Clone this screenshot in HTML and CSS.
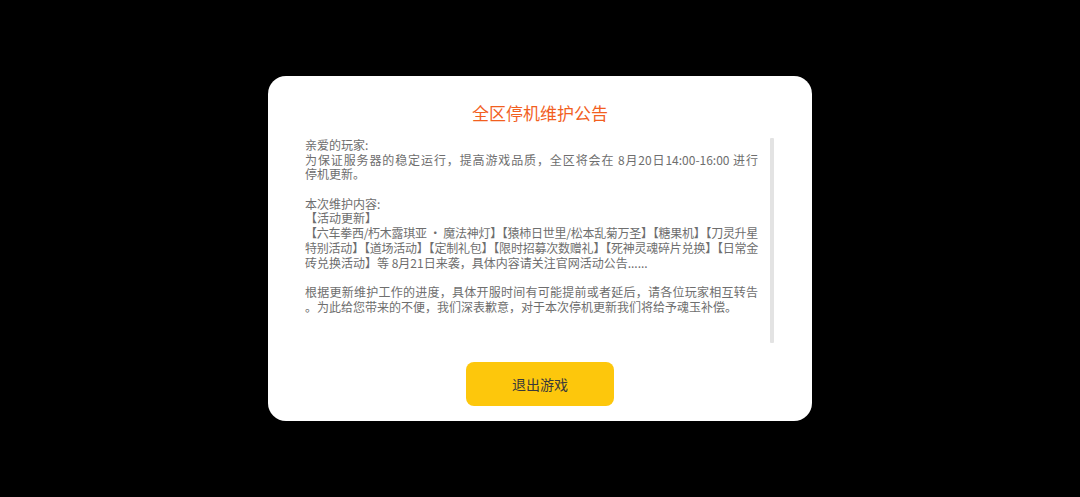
FILE: index.html
```html
<!DOCTYPE html>
<html lang="zh-CN">
<head>
<meta charset="utf-8">
<title>全区停机维护公告</title>
<link rel="stylesheet" href="styles.css">
</head>
<body>
<div class="screen">
  <div class="card">
    <h1 class="title">全区停机维护公告</h1>
    <div class="scroll">
      <div class="content">
        <div class="line">亲爱的玩家:</div>
        <div class="line full">为保证服务器的稳定运行，提高游戏品质，全区将会在 8月20日14:00-16:00 进行</div>
        <div class="line">停机更新。</div>
        <div class="line blank"></div>
        <div class="line">本次维护内容:</div>
        <div class="line">【活动更新】</div>
        <div class="line full tight">【六车拳西/朽木露琪亚 · 魔法神灯】【猿柿日世里/松本乱菊万圣】【糖果机】【刀灵升星</div>
        <div class="line full tight">特别活动】【道场活动】【定制礼包】【限时招募次数赠礼】【死神灵魂碎片兑换】【日常金</div>
        <div class="line">砖兑换活动】等 8月21日来袭，具体内容请关注官网活动公告......</div>
        <div class="line blank"></div>
        <div class="line full">根据更新维护工作的进度，具体开服时间有可能提前或者延后，请各位玩家相互转告</div>
        <div class="line">。为此给您带来的不便，我们深表歉意，对于本次停机更新我们将给予魂玉补偿。</div>
      </div>
      <div class="scrollbar"></div>
    </div>
    <div class="actions">
      <button class="btn">退出游戏</button>
    </div>
  </div>
</div>
</body>
</html>
```

FILE: styles.css
```css
* { box-sizing: border-box; }
html, body {
  margin: 0;
  padding: 0;
  background: #000;
}
body {
  font-family: "Noto Sans CJK SC", "Noto Sans", sans-serif;
}
.screen {
  width: 1080px;
  height: 497px;
  display: flex;
  align-items: center;
  justify-content: center;
}
.card {
  width: 544px;
  height: 345px;
  background: #fff;
  border-radius: 18px;
  padding: 25px 37px 15px 37px;
  display: flex;
  flex-direction: column;
}
.title {
  margin: 0;
  font-size: 17px;
  line-height: 24px;
  font-weight: 400;
  color: #f25f1f;
  text-align: center;
}
.scroll {
  margin-top: 13px;
  height: 205px;
  display: flex;
}
.content {
  width: 465px;
  padding-right: 12px;
  font-size: 12px;
  color: #6e6e6e;
  display: flex;
  flex-direction: column;
}
.line {
  height: 14.7px;
  line-height: 14.7px;
  white-space: nowrap;
}
.line.full {
  text-align: justify;
  text-align-last: justify;
}
.line.tight {
  letter-spacing: -0.35px;
}
.scrollbar {
  width: 4px;
  height: 100%;
  background: #e3e3e3;
  border-radius: 1px;
}
.actions {
  margin-top: 19px;
  display: flex;
  justify-content: center;
}
.btn {
  width: 148px;
  height: 44px;
  border: none;
  border-radius: 8px;
  background: #fdc70c;
  color: #3a3a3a;
  font-family: "Noto Sans CJK SC", "Noto Sans", sans-serif;
  font-size: 14px;
  padding: 0;
}
```
